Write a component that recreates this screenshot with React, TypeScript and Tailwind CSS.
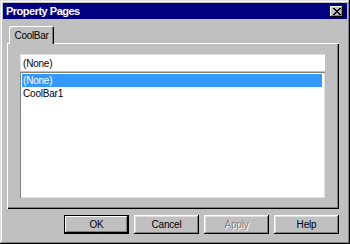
import React from "react";

const font = { fontFamily: '"Liberation Sans", Arial, sans-serif' };

function Btn({ label, def, disabled }: { label: string; def?: boolean; disabled?: boolean }) {
  return (
    <div
      className={
        "w-[65px] h-[19px] flex items-center justify-center bg-[#c0c0c0] text-[10px] tracking-[-0.2px] " +
        (def
          ? "border border-black shadow-[inset_-1px_-1px_#000,inset_1px_1px_#fff,inset_-2px_-2px_#808080]"
          : "shadow-[inset_-1px_-1px_#000,inset_1px_1px_#fff,inset_-2px_-2px_#808080,inset_2px_2px_#dfdfdf]")
      }
    >
      {disabled ? (
        <span className="text-[#808080] [text-shadow:1px_1px_0_#fff]">{label}</span>
      ) : (
        <span className="text-black">{label}</span>
      )}
    </div>
  );
}

export default function App() {
  return (
    <div
      style={font}
      className="w-[350px] h-[244px] bg-[#c0c0c0] p-[3px] flex flex-col shadow-[inset_-1px_-1px_#000,inset_1px_1px_#dfdfdf,inset_-2px_-2px_#808080,inset_2px_2px_#fff]"
    >
      {/* Title bar */}
      <div className="h-[16px] bg-[#000080] flex items-center justify-between pl-[3px] pr-[4px]">
        <span className="text-white font-bold text-[11px] tracking-[-0.5px] leading-none">Property Pages</span>
        <div className="w-[13px] h-[11px] bg-[#c0c0c0] flex items-center justify-center shadow-[inset_-1px_-1px_#000,inset_1px_1px_#fff,inset_-2px_-2px_#808080]">
          <svg width="8" height="7" viewBox="0 0 8 7" shapeRendering="crispEdges">
            <path
              d="M0 0h2v1h-2z M6 0h2v1h-2z M1 1h2v1h-2z M5 1h2v1h-2z M2 2h4v1h-4z M3 3h2v1h-2z M2 4h4v1h-4z M1 5h2v1h-2z M5 5h2v1h-2z M0 6h2v1h-2z M6 6h2v1h-2z"
              fill="#000"
            />
          </svg>
        </div>
      </div>

      {/* Body */}
      <div className="flex-1 flex flex-col px-[4px]">
        {/* Tabs */}
        <div className="pt-[7px] pl-[2px] flex">
          <div className="relative z-10 w-[45px] h-[18px] bg-[#c0c0c0] flex items-center justify-center rounded-t-[2px] shadow-[inset_1px_1px_#fff,inset_-1px_0_#000,inset_-2px_0_#808080] text-[10px] tracking-[-0.3px] text-black">
            CoolBar
          </div>
        </div>
        {/* Panel */}
        <div className="-mt-[1px] w-[332px] h-[166px] bg-[#c0c0c0] pt-[11px] pl-[13px] shadow-[inset_1px_1px_#fff,inset_-1px_-1px_#000,inset_-2px_-2px_#808080]">
          <div className="w-[305px] h-[17px] bg-white flex items-center pl-[2px] text-[10px] tracking-[-0.2px] text-black border-t border-l border-[#dfdfdf]">
            (None)
          </div>
          <div className="mt-[1px] w-[305px] h-[126px] bg-white pt-[2px] pl-[2px] pr-[3px] shadow-[inset_1px_1px_#808080,inset_-1px_-1px_#dfdfdf]">
            <div className="h-[13px] bg-[#3399ff] text-white text-[10px] tracking-[-0.2px] flex items-center pl-[1px]">
              (None)
            </div>
            <div className="h-[13px] text-black text-[10px] tracking-[-0.2px] flex items-center pl-[1px]">
              CoolBar1
            </div>
          </div>
        </div>
        {/* Buttons */}
        <div className="mt-[6px] flex gap-[5px] pl-[57px]">
          <Btn label="OK" def />
          <Btn label="Cancel" />
          <Btn label="Apply" disabled />
          <Btn label="Help" />
        </div>
      </div>
    </div>
  );
}
